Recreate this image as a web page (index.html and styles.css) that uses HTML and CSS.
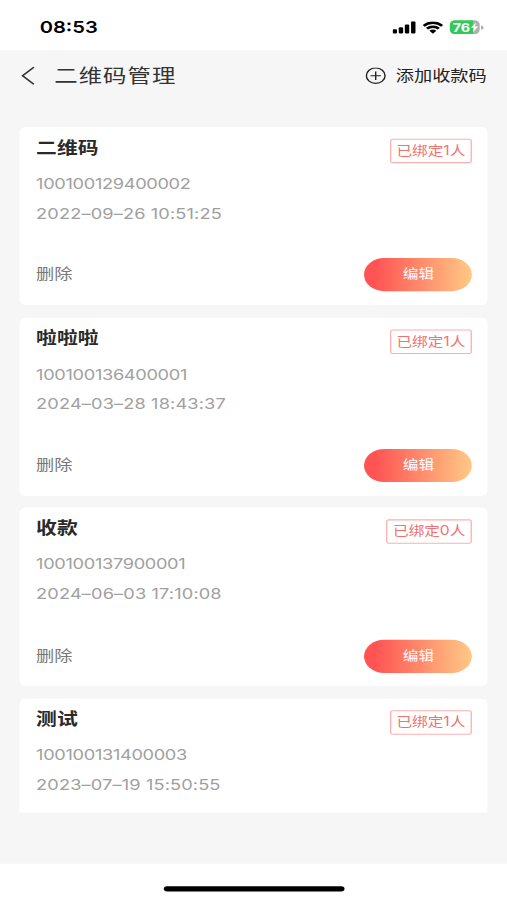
FILE: index.html
```html
<!DOCTYPE html>
<html lang="zh-CN">
<head>
    <meta charset="UTF-8">
    <meta name="viewport" content="width=device-width, initial-scale=1.0">
    <title>二维码管理</title>
    <link rel="stylesheet" href="styles.css">
</head>
<body>

    <div class="phone">
        <!-- 状态栏 -->
        <div class="status-bar">
            <span class="time">08:53</span>
            <div class="status-icons">
                <svg class="signal" width="18" height="12" viewBox="0 0 18 12">
                    <rect x="0" y="7.5" width="3.4" height="4" rx="1"/>
                    <rect x="4.7" y="5.6" width="3.4" height="5.9" rx="1"/>
                    <rect x="9.4" y="3" width="3.4" height="8.5" rx="1"/>
                    <rect x="14.2" y="0" width="3.4" height="11.5" rx="1"/>
                </svg>
                <svg class="wifi" width="16" height="12" viewBox="0 0 16 12">
                    <path d="M0.9 4.2a10.3 10.3 0 0 1 14.2 0M3.4 6.9a6.7 6.7 0 0 1 9.2 0" fill="none" stroke="#000" stroke-width="2.2"/>
                    <path d="M8 11.6L5.3 8.9a4 4 0 0 1 5.4 0z"/>
                </svg>
                <div class="battery">
                    <span>76</span>
                    <svg width="6" height="9" viewBox="0 0 6 9"><path d="M3.9 0L0.2 5h2.3L2 9l3.8-5.2H3.4z" fill="#fff"/></svg>
                </div>
                <i class="battery-cap"></i>
            </div>
        </div>

        <!-- 标题栏 -->
        <div class="header">
            <svg class="back" width="12" height="18" viewBox="0 0 12 18"><path d="M10 1L1.4 9l8.6 8" fill="none" stroke="#333" stroke-width="1.4"/></svg>
            <h1>二维码管理</h1>
            <svg class="plus" width="16" height="16" viewBox="0 0 16 16"><path d="M8 4v8M4 8h8" stroke="#222" stroke-width="1.1"/><circle cx="8" cy="8" r="7.2" fill="none" stroke="#222" stroke-width="1.1"/></svg>
            <span class="add">添加收款码</span>
        </div>

        <!-- 收款码列表 -->
        <div class="list">
            <div class="card">
                <div class="card-top"><h2>二维码</h2><span class="badge">已绑定1人</span></div>
                <p class="code">100100129400002</p>
                <p class="date">2022–09–26 10:51:25</p>
                <div class="card-bottom"><span class="delete">删除</span><button>编辑</button></div>
            </div>
            <div class="card">
                <div class="card-top"><h2>啦啦啦</h2><span class="badge">已绑定1人</span></div>
                <p class="code">100100136400001</p>
                <p class="date">2024–03–28 18:43:37</p>
                <div class="card-bottom"><span class="delete">删除</span><button>编辑</button></div>
            </div>
            <div class="card">
                <div class="card-top"><h2>收款</h2><span class="badge">已绑定0人</span></div>
                <p class="code">100100137900001</p>
                <p class="date">2024–06–03 17:10:08</p>
                <div class="card-bottom"><span class="delete">删除</span><button>编辑</button></div>
            </div>
            <div class="card card-cut">
                <div class="card-top"><h2>测试</h2><span class="badge">已绑定1人</span></div>
                <p class="code">100100131400003</p>
                <p class="date">2023–07–19 15:50:55</p>
            </div>
        </div>

        <div class="home-area"><div class="home-bar"></div></div>
    </div>

</body>
</html>
```
FILE: styles.css
```css
* {
    box-sizing: border-box;
}

body {
    margin: 0;
    width: 507px;
    height: 900px;
    overflow: hidden;
    font-family: Inter, "Noto Sans CJK SC", sans-serif;
}

/* 390x844 的页面铺满窗口 */
.phone {
    width: 390px;
    height: 844px;
    display: flex;
    flex-direction: column;
    background: #f6f6f6;
    transform: scale(1.3, 1.0664);
    transform-origin: 0 0;
}

/* 状态栏 */
.status-bar {
    height: 47px;
    padding: 4px 18.5px 0 30.5px;
    display: flex;
    align-items: center;
    justify-content: space-between;
    background: #fff;
}

.time {
    font-size: 15.5px;
    font-weight: 600;
}

.status-icons {
    display: flex;
    align-items: center;
}

.wifi {
    margin: 0 5px 0 5px;
}

.battery {
    width: 23px;
    height: 13px;
    padding-left: 2px;
    display: flex;
    align-items: center;
    border-radius: 4px;
    background: linear-gradient(90deg, #34c759 76%, #b0b0b0 76%);
    color: #fff;
    font-size: 11px;
    font-weight: 700;
}

.battery-cap {
    width: 1.3px;
    height: 4px;
    margin-left: 1px;
    border-radius: 0 2px 2px 0;
    background: #b0b0b0;
}

/* 标题栏 */
.header {
    height: 47px;
    padding: 0 15.6px 0 16px;
    display: flex;
    align-items: center;
}

h1 {
    margin: 0 auto 2px 13.7px;
    font-size: 18px;
    font-weight: 400;
    letter-spacing: 0.8px;
    color: #333;
}

.add {
    margin: 0 0 2px 7px;
    font-size: 14px;
    color: #222;
}

/* 列表 */
.list {
    flex: 1;
    padding: 24.7px 14.8px 0 15.4px;
}

.card {
    height: 167px;
    margin-bottom: 11.9px;
    padding: 11px 11.8px 0 12.4px;
    border-radius: 5px;
    background: #fff;
}

.card-cut {
    height: 107px;
    margin-bottom: 0;
    border-radius: 5px 5px 0 0;
}

.card-top {
    height: 28px;
    display: flex;
    align-items: flex-start;
    justify-content: space-between;
}

h2 {
    margin: 0;
    font-size: 16px;
    line-height: 17px;
    font-weight: 700;
    color: #2a2a2a;
}

.badge {
    height: 23px;
    padding: 0 4.5px;
    border: 1px solid #fbb0ae;
    border-radius: 2px;
    font-size: 12px;
    line-height: 20px;
    color: #f2716f;
}

.card p {
    margin: 0;
    height: 28px;
    font-size: 14px;
    line-height: 28px;
    color: #a0a0a0;
}

.card .code {
    letter-spacing: -0.25px;
}

.card .date {
    letter-spacing: 0.1px;
}

.card-bottom {
    margin-top: 28.7px;
    display: flex;
    align-items: center;
    justify-content: space-between;
}

.delete {
    margin-bottom: 3px;
    font-size: 14px;
    color: #777;
}

button {
    width: 83px;
    height: 31px;
    padding: 0 0 4px;
    border: none;
    border-radius: 16px;
    background: linear-gradient(90deg, #ff5453 10%, #ffc986);
    color: #fff;
    font-family: inherit;
    font-size: 12px;
}

/* 底部横条 */
.home-area {
    height: 34px;
    padding-top: 20.5px;
    background: #fff;
}

.home-bar {
    width: 139px;
    height: 5px;
    margin: 0 auto;
    border-radius: 3px;
    background: #000;
}
```
